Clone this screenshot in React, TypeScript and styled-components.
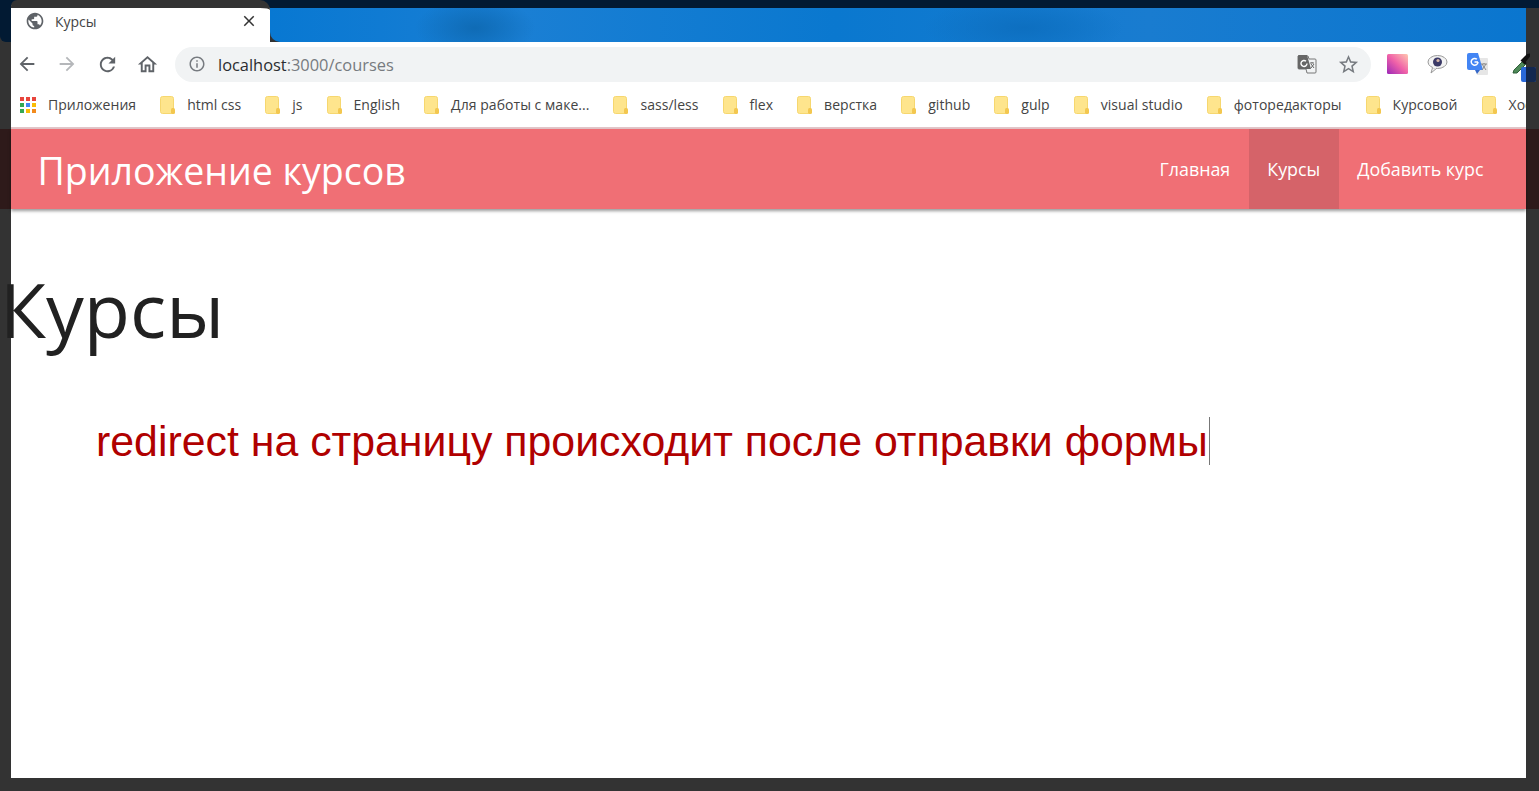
import React from "react";
import styled, { createGlobalStyle } from "styled-components";
import {
  MdArrowBack,
  MdArrowForward,
  MdClose,
  MdInfoOutline,
  MdOutlineHome,
  MdPublic,
  MdRefresh,
  MdStarBorder,
} from "react-icons/md";

const GlobalStyle = createGlobalStyle`
  html, body {
    margin: 0;
    padding: 0;
    background: #333333;
  }
`;

const UI_FONT = `"Open Sans", "Noto Sans", sans-serif`;

const Page = styled.div`
  width: 1539px;
  height: 791px;
  overflow: hidden;
  display: flex;
  flex-direction: column;
  background: #333333;
  font-family: ${UI_FONT};
`;

const TitleStrip = styled.div`
  display: flex;
  height: 42px;
  flex: none;
  padding-right: 13px;
  background: linear-gradient(#021a33 8px, #333333 8px);
`;

const Corner = styled.div`
  width: 11px;
  margin-top: 8px;
  background: #021a33;
  border-bottom-left-radius: 6px;
`;

const Tab = styled.div`
  width: 259px;
  box-sizing: border-box;
  display: flex;
  align-items: center;
  padding: 0 12px 8px 14px;
  background: #fff;
  border-top: 8px solid #333333;
  border-top-left-radius: 6px;
  border-top-right-radius: 10px;
  color: #444;
  font-size: 14px;
`;

const TabTitle = styled.span`
  flex: 1;
  margin-left: 10px;
`;

const Desktop = styled.div`
  flex: 1;
  margin-top: 8px;
  background:
    radial-gradient(ellipse 60px 30px at 205px 20px, #0f6bb5 0%, transparent 100%),
    radial-gradient(ellipse 100px 30px at 60% 20px, #0d6fc0 0%, transparent 100%),
    linear-gradient(90deg, #0878d2, #1a7fd4 20%, #0a78cf 45%, #197cd0 70%, #0a76cf);
  border-bottom-left-radius: 10px;
`;

const Chrome = styled.div`
  flex: none;
  margin: 0 13px 0 11px;
  background: #fff;
`;

const Toolbar = styled.div`
  height: 44px;
  display: flex;
  align-items: center;
  gap: 8px;
  position: relative;
  color: #5f6368;
`;

const ToolButton = styled.span<{ $faded?: boolean }>`
  width: 32px;
  height: 24px;
  flex: none;
  display: flex;
  align-items: center;
  justify-content: center;
  color: ${(p) => (p.$faded ? "#b5b7ba" : "#5f6368")};
`;

const Omnibox = styled.div`
  width: 1196px;
  height: 35px;
  flex: none;
  box-sizing: border-box;
  margin-left: 4px;
  display: flex;
  align-items: center;
  padding: 0 11px 0 13px;
  background: #f1f3f4;
  border-radius: 18px;
  font-size: 16.4px;
  color: #777b80;
`;

const Host = styled.span`
  color: #2b2d30;
`;

const Url = styled.span`
  flex: 1;
  margin-left: 12px;
`;

const StarMark = styled(MdStarBorder)`
  margin-left: 20px;
`;

const Extensions = styled.div`
  display: flex;
  align-items: center;
  gap: 19px;
  margin-left: 8px;
`;

const Spill = styled.svg`
  position: absolute;
  left: 1499px;
  top: 10px;
`;

const Bookmarks = styled.div`
  height: 41px;
  box-sizing: border-box;
  display: flex;
  align-items: center;
  gap: 24px;
  padding: 0 0 4px 9px;
  overflow: hidden;
  font-size: 14px;
  letter-spacing: 0.04px;
  color: #444;
`;

const Bookmark = styled.span`
  display: flex;
  align-items: center;
  gap: 12px;
  flex: none;
  white-space: nowrap;
`;

const NavBand = styled.div`
  flex: none;
  height: 82px;
  display: flex;
  flex-direction: column;
  background: linear-gradient(#333 2px, #2e1a1a 2px);
  padding: 0 13px 0 11px;
`;

const NavRule = styled.div`
  height: 2px;
  flex: none;
  background: #e3c6c9;
`;

const Navbar = styled.nav`
  height: 80px;
  flex: none;
  display: flex;
  align-items: stretch;
  justify-content: space-between;
  padding: 0 24px 0 26.5px;
  background: #f06f75;
  color: #fff;
  position: relative;
  box-shadow: 0 2px 3px rgba(0, 0, 0, 0.4);
`;

const Brand = styled.div`
  font-size: 37.5px;
  line-height: 84px;
  height: 80px;
`;

const NavLinks = styled.div`
  display: flex;
`;

const NavLink = styled.a<{ $active?: boolean }>`
  display: flex;
  align-items: center;
  padding: 0 18.5px;
  font-size: 17.85px;
  background: ${(p) => (p.$active ? "#d56369" : "transparent")};
`;

const Body = styled.main`
  flex: 1;
  margin: 0 13px 13px 11px;
  background: #fff;
`;

const Heading = styled.h1`
  margin: 52px 0 0 -11px;
  font-family: ${UI_FONT};
  font-weight: 400;
  font-size: 75.5px;
  line-height: 96px;
  color: #212121;
`;

const Note = styled.p`
  margin: 60px 0 0 85px;
  font-family: "Liberation Sans", Arial, sans-serif;
  font-size: 42.85px;
  line-height: 48px;
  color: #b00000;
  display: flex;
  align-items: center;
`;

const Caret = styled.span`
  width: 1.5px;
  height: 48px;
  margin-left: 1px;
  background: #777;
`;

const Folder = () => (
  <svg width="15" height="18" viewBox="0 0 15 18">
    <rect x="0.5" y="0.5" width="13" height="17" rx="2" fill="#fee58d" stroke="#f6d76f" />
    <rect x="11" y="12" width="4" height="6" rx="1.5" fill="#f3c74f" />
  </svg>
);

const AppsIcon = () => (
  <svg width="16" height="16" viewBox="0 0 16 16">
    {["#e8453c", "#e8453c", "#e8453c", "#34a853", "#4285f4", "#fbbc05", "#34a853", "#fbbc05", "#f28b1d"].map(
      (c, i) => (
        <rect key={i} x={(i % 3) * 6} y={Math.floor(i / 3) * 6} width="4" height="4" fill={c} />
      )
    )}
  </svg>
);

const TranslateMark = () => (
  <svg width="20" height="20" viewBox="0 0 20 20">
    <path d="M1 2h10l1 3 6 0a1 1 0 0 1 1 1v12a1 1 0 0 1-1 1h-8l-1-4H2a1 1 0 0 1-1-1z" fill="#f1f3f4" stroke="#777" />
    <path d="M1 2a1 1 0 0 1 1-1h8l4 14H2a1 1 0 0 1-1-1z" fill="#666" />
    <path d="M10 9.5a3 3 0 1 1-1-2.3" fill="none" stroke="#fff" strokeWidth="1.4" />
    <path d="M13 9h4M15 8v1M14 14l3-4M14 10l3 4" stroke="#666" strokeWidth="1" fill="none" />
  </svg>
);

const Swatch = () => (
  <svg width="21" height="20" viewBox="0 0 21 20">
    <defs>
      <linearGradient id="sw" x1="1" y1="0" x2="0" y2="1">
        <stop offset="0" stopColor="#ffc8b0" />
        <stop offset="0.5" stopColor="#f062a8" />
        <stop offset="1" stopColor="#9b28b8" />
      </linearGradient>
    </defs>
    <rect width="21" height="20" rx="1.5" fill="url(#sw)" />
  </svg>
);

const EyeBubble = () => (
  <svg width="21" height="22" viewBox="0 0 21 22">
    <path d="M6 13l-2 7 6-5z" fill="#f3f3f3" stroke="#999" />
    <ellipse cx="10.5" cy="9" rx="9.5" ry="6.5" fill="#f3f3f3" stroke="#999" />
    <path d="M6 13.5l3 1.5" stroke="#f3f3f3" strokeWidth="2" />
    <circle cx="10.5" cy="9" r="4.5" fill="#3b3a66" />
    <circle cx="11" cy="7.5" r="1.6" fill="#d7b7a8" />
  </svg>
);

const GoogleTranslate = () => (
  <svg width="21" height="22" viewBox="0 0 21 22">
    <path d="M6 5h14a1 1 0 0 1 1 1v15a1 1 0 0 1-1 1H10z" fill="#e6e6e6" />
    <path d="M2 0h9l5 17H2a2 2 0 0 1-2-2V2a2 2 0 0 1 2-2z" fill="#4285f4" />
    <path d="M8 17h5l-3 4z" fill="#3367c8" />
    <path d="M11 9a3.4 3.4 0 1 1-1.1-2.7" fill="none" stroke="#fff" strokeWidth="1.5" />
    <path d="M7.5 9H11" stroke="#fff" strokeWidth="1.5" />
    <path d="M14 11h6M17 10v1M15 17l4-6M15 11l4 6" stroke="#888" strokeWidth="1" fill="none" />
  </svg>
);

const bookmarks = [
  "html css",
  "js",
  "English",
  "Для работы с маке...",
  "sass/less",
  "flex",
  "верстка",
  "github",
  "gulp",
  "visual studio",
  "фоторедакторы",
  "Курсовой",
  "Хостинг",
];

export default function App() {
  return (
    <Page>
      <GlobalStyle />
      <TitleStrip>
        <Corner />
        <Tab>
          <MdPublic size={20} color="#5f6368" />
          <TabTitle>Курсы</TabTitle>
          <MdClose size={18} color="#333" />
        </Tab>
        <Desktop />
      </TitleStrip>
      <Chrome>
        <Toolbar>
          <ToolButton><MdArrowBack size={22} /></ToolButton>
          <ToolButton $faded><MdArrowForward size={22} /></ToolButton>
          <ToolButton><MdRefresh size={23} /></ToolButton>
          <ToolButton><MdOutlineHome size={23} /></ToolButton>
          <Omnibox>
            <MdInfoOutline size={18} />
            <Url>
              <Host>localhost</Host>:3000/courses
            </Url>
            <TranslateMark />
            <StarMark size={23} />
          </Omnibox>
          <Extensions>
            <Swatch />
            <EyeBubble />
            <GoogleTranslate />
          </Extensions>
          <Spill width="40" height="30" viewBox="0 0 40 30">
            <path d="M3 21l1-3 9-9 3 3-9 9z" fill="#4f8a58" stroke="#2f5f3a" />
            <path d="M12 7l5-5 3-0.5 0 3-4 5 0.5 2-2 1-4-4z" fill="#111" />
            <rect x="11" y="15" width="15" height="15" rx="2" fill="#2a68d8" />
            <path d="M16 15h8a2 2 0 0 1 2 2v11a2 2 0 0 1-2 2h-8z" fill="#13284f" />
          </Spill>
        </Toolbar>
        <Bookmarks>
          <Bookmark>
            <AppsIcon />
            Приложения
          </Bookmark>
          {bookmarks.map((b) => (
            <Bookmark key={b}>
              <Folder />
              {b}
            </Bookmark>
          ))}
        </Bookmarks>
      </Chrome>
      <NavBand>
        <NavRule />
        <Navbar>
          <Brand>Приложение курсов</Brand>
          <NavLinks>
            <NavLink>Главная</NavLink>
            <NavLink $active>Курсы</NavLink>
            <NavLink>Добавить курс</NavLink>
          </NavLinks>
        </Navbar>
      </NavBand>
      <Body>
        <Heading>Курсы</Heading>
        <Note>
          redirect на страницу происходит после отправки формы
          <Caret />
        </Note>
      </Body>
    </Page>
  );
}
